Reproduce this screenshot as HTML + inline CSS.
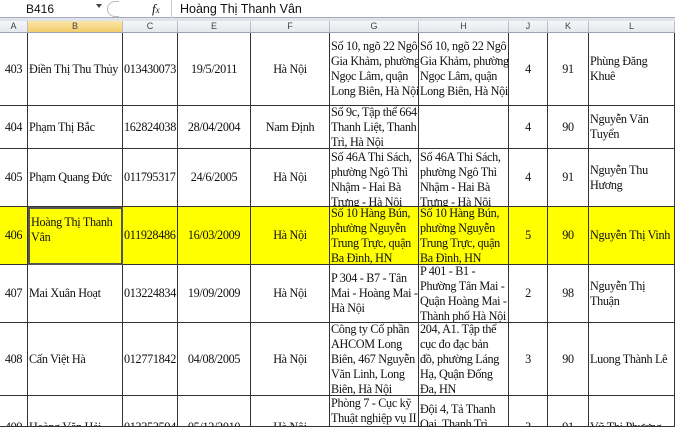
<!DOCTYPE html>
<html><head><meta charset="utf-8"><style>
*{margin:0;padding:0;box-sizing:border-box}
html,body{width:675px;height:427px;overflow:hidden}
body{background:#fff;position:relative}
#w{position:absolute;left:0;top:0;width:675px;height:427px;overflow:hidden;font-family:"Liberation Serif",serif;font-size:12.2px;letter-spacing:-0.32px;color:#111}
.fb{position:absolute;left:0;top:0;width:675px;height:18px;background:#fff;border-bottom:1px solid #aab;font-family:"Liberation Sans",sans-serif;font-size:12px;letter-spacing:0}
.gap{position:absolute;left:0;top:18px;width:675px;height:3px;background:#dfe3ea}
.hdr{position:absolute;top:21px;height:12px;background:linear-gradient(#f6f7f9,#e4e7ec);border-right:1px solid #b9bfc8;border-bottom:1px solid #9aa3ad;font-family:"Liberation Sans",sans-serif;font-size:9px;letter-spacing:0;color:#444;text-align:center;line-height:11px}
.hdr.sel{background:linear-gradient(#fbe6a8,#f3cd6c);}
.c{position:absolute;border-right:1px solid #333;border-bottom:1px solid #333;display:flex;align-items:center;overflow:hidden;line-height:15px;padding:0 1px;white-space:nowrap}
.ctr{justify-content:center;text-align:center}
.y{background:#ffff00}
</style></head><body><div id="w">
<div class="fb">
<div style="position:absolute;left:26px;top:2px;">B416</div>
<div style="position:absolute;left:96px;top:4px;width:0;height:0;border-left:3px solid transparent;border-right:3px solid transparent;border-top:4px solid #444"></div>
<div style="position:absolute;left:107px;top:1px;width:12px;height:16px;border:1px solid #bbb;border-right:none;border-radius:8px 0 0 8px"></div>
<div style="position:absolute;left:152px;top:1px;font-family:'Liberation Serif',serif;font-style:italic;font-size:13px">f<span style="font-size:9px">x</span></div>
<div style="position:absolute;left:171px;top:0;width:1px;height:18px;background:#ccd"></div>
<div style="position:absolute;left:180px;top:2px;font-size:12.5px">Hoàng Thị Thanh Vân</div>
</div>
<div class="gap"></div>
<div class="hdr" style="left:0;width:28px">A</div>
<div class="hdr sel" style="left:28px;width:95px">B</div>
<div class="hdr" style="left:123px;width:55px">C</div>
<div class="hdr" style="left:178px;width:73px">E</div>
<div class="hdr" style="left:251px;width:79px">F</div>
<div class="hdr" style="left:330px;width:89px">G</div>
<div class="hdr" style="left:419px;width:90px">H</div>
<div class="hdr" style="left:509px;width:39px">J</div>
<div class="hdr" style="left:548px;width:41px">K</div>
<div class="hdr" style="left:589px;width:86px">L</div>

<div class="c ctr" style="left:0;top:33px;width:28px;height:73px">403</div>
<div class="c" style="left:28px;top:33px;width:95px;height:73px">Điền Thị Thu Thủy</div>
<div class="c" style="left:123px;top:33px;width:55px;height:73px">013430073</div>
<div class="c ctr" style="left:178px;top:33px;width:73px;height:73px">19/5/2011</div>
<div class="c ctr" style="left:251px;top:33px;width:79px;height:73px">Hà Nội</div>
<div class="c" style="left:330px;top:33px;width:89px;height:73px">Số 10, ngõ 22 Ngô<br>Gia Khảm, phường<br>Ngọc Lâm, quận<br>Long Biên, Hà Nội</div>
<div class="c" style="left:419px;top:33px;width:90px;height:73px">Số 10, ngõ 22 Ngô<br>Gia Khảm, phường<br>Ngọc Lâm, quận<br>Long Biên, Hà Nội</div>
<div class="c ctr" style="left:509px;top:33px;width:39px;height:73px">4</div>
<div class="c ctr" style="left:548px;top:33px;width:41px;height:73px">91</div>
<div class="c" style="left:589px;top:33px;width:86px;height:73px">Phùng Đăng<br>Khuê</div>

<div class="c ctr" style="left:0;top:106px;width:28px;height:43px">404</div>
<div class="c" style="left:28px;top:106px;width:95px;height:43px">Phạm Thị Bắc</div>
<div class="c" style="left:123px;top:106px;width:55px;height:43px">162824038</div>
<div class="c ctr" style="left:178px;top:106px;width:73px;height:43px">28/04/2004</div>
<div class="c ctr" style="left:251px;top:106px;width:79px;height:43px">Nam Định</div>
<div class="c" style="left:330px;top:106px;width:89px;height:43px">Số 9c, Tập thể 664<br>Thanh Liệt, Thanh<br>Trì, Hà Nội</div>
<div class="c" style="left:419px;top:106px;width:90px;height:43px"></div>
<div class="c ctr" style="left:509px;top:106px;width:39px;height:43px">4</div>
<div class="c ctr" style="left:548px;top:106px;width:41px;height:43px">90</div>
<div class="c" style="left:589px;top:106px;width:86px;height:43px">Nguyễn Văn<br>Tuyển</div>

<div class="c ctr" style="left:0;top:149px;width:28px;height:58px">405</div>
<div class="c" style="left:28px;top:149px;width:95px;height:58px">Phạm Quang Đức</div>
<div class="c" style="left:123px;top:149px;width:55px;height:58px">011795317</div>
<div class="c ctr" style="left:178px;top:149px;width:73px;height:58px">24/6/2005</div>
<div class="c ctr" style="left:251px;top:149px;width:79px;height:58px">Hà Nội</div>
<div class="c" style="left:330px;top:149px;width:89px;height:58px;align-items:flex-start;padding-top:1px">Số 46A Thi Sách,<br>phường Ngô Thì<br>Nhậm - Hai Bà<br>Trưng - Hà Nội</div>
<div class="c" style="left:419px;top:149px;width:90px;height:58px;align-items:flex-start;padding-top:1px">Số 46A Thi Sách,<br>phường Ngô Thì<br>Nhậm - Hai Bà<br>Trưng - Hà Nội</div>
<div class="c ctr" style="left:509px;top:149px;width:39px;height:58px">4</div>
<div class="c ctr" style="left:548px;top:149px;width:41px;height:58px">91</div>
<div class="c" style="left:589px;top:149px;width:86px;height:58px">Nguyễn Thu<br>Hương</div>

<div class="c ctr y" style="left:0;top:207px;width:28px;height:58px">406</div>
<div class="c y" style="left:28px;top:207px;width:95px;height:58px;border:2px solid #555;align-items:flex-start;padding-top:6px">Hoàng Thị Thanh<br>Vân</div>
<div class="c y" style="left:123px;top:207px;width:55px;height:58px">011928486</div>
<div class="c ctr y" style="left:178px;top:207px;width:73px;height:58px">16/03/2009</div>
<div class="c ctr y" style="left:251px;top:207px;width:79px;height:58px">Hà Nội</div>
<div class="c y" style="left:330px;top:207px;width:89px;height:58px">Số 10 Hàng Bún,<br>phường Nguyễn<br>Trung Trực, quận<br>Ba Đình, HN</div>
<div class="c y" style="left:419px;top:207px;width:90px;height:58px">Số 10 Hàng Bún,<br>phường Nguyễn<br>Trung Trực, quận<br>Ba Đình, HN</div>
<div class="c ctr y" style="left:509px;top:207px;width:39px;height:58px">5</div>
<div class="c ctr y" style="left:548px;top:207px;width:41px;height:58px">90</div>
<div class="c y" style="left:589px;top:207px;width:86px;height:58px">Nguyễn Thị Vinh</div>

<div class="c ctr" style="left:0;top:265px;width:28px;height:58px">407</div>
<div class="c" style="left:28px;top:265px;width:95px;height:58px">Mai Xuân Hoạt</div>
<div class="c" style="left:123px;top:265px;width:55px;height:58px">013224834</div>
<div class="c ctr" style="left:178px;top:265px;width:73px;height:58px">19/09/2009</div>
<div class="c ctr" style="left:251px;top:265px;width:79px;height:58px">Hà Nội</div>
<div class="c" style="left:330px;top:265px;width:89px;height:58px">P 304 - B7 - Tân<br>Mai - Hoàng Mai -<br>Hà Nội</div>
<div class="c" style="left:419px;top:265px;width:90px;height:58px">P 401 - B1 -<br>Phường Tân Mai -<br>Quận Hoàng Mai -<br>Thành phố Hà Nội</div>
<div class="c ctr" style="left:509px;top:265px;width:39px;height:58px">2</div>
<div class="c ctr" style="left:548px;top:265px;width:41px;height:58px">98</div>
<div class="c" style="left:589px;top:265px;width:86px;height:58px">Nguyễn Thị<br>Thuận</div>

<div class="c ctr" style="left:0;top:323px;width:28px;height:73px">408</div>
<div class="c" style="left:28px;top:323px;width:95px;height:73px">Cấn Việt Hà</div>
<div class="c" style="left:123px;top:323px;width:55px;height:73px">012771842</div>
<div class="c ctr" style="left:178px;top:323px;width:73px;height:73px">04/08/2005</div>
<div class="c ctr" style="left:251px;top:323px;width:79px;height:73px">Hà Nội</div>
<div class="c" style="left:330px;top:323px;width:89px;height:73px">Công ty Cổ phần<br>AHCOM Long<br>Biên, 467 Nguyễn<br>Văn Linh, Long<br>Biên, Hà Nội</div>
<div class="c" style="left:419px;top:323px;width:90px;height:73px">204, A1. Tập thể<br>cục đo đạc bản<br>đồ, phường Láng<br>Hạ, Quận Đống<br>Đa, HN</div>
<div class="c ctr" style="left:509px;top:323px;width:39px;height:73px">3</div>
<div class="c ctr" style="left:548px;top:323px;width:41px;height:73px">90</div>
<div class="c" style="left:589px;top:323px;width:86px;height:73px">Luong Thành Lê</div>

<div class="c ctr" style="left:0;top:396px;width:28px;height:31px;align-items:flex-start;padding-top:24px">409</div>
<div class="c" style="left:28px;top:396px;width:95px;height:31px;align-items:flex-start;padding-top:24px">Hoàng Văn Hải</div>
<div class="c" style="left:123px;top:396px;width:55px;height:31px;align-items:flex-start;padding-top:24px">013353594</div>
<div class="c ctr" style="left:178px;top:396px;width:73px;height:31px;align-items:flex-start;padding-top:24px">05/12/2010</div>
<div class="c ctr" style="left:251px;top:396px;width:79px;height:31px;align-items:flex-start;padding-top:24px">Hà Nội</div>
<div class="c" style="left:330px;top:396px;width:89px;height:31px;align-items:flex-start">Phòng 7 - Cục kỹ<br>Thuật nghiệp vụ II</div>
<div class="c" style="left:419px;top:396px;width:90px;height:31px;align-items:flex-start;padding-top:6px">Đội 4, Tả Thanh<br>Oai, Thanh Trì</div>
<div class="c ctr" style="left:509px;top:396px;width:39px;height:31px;align-items:flex-start;padding-top:24px">3</div>
<div class="c ctr" style="left:548px;top:396px;width:41px;height:31px;align-items:flex-start;padding-top:24px">91</div>
<div class="c" style="left:589px;top:396px;width:86px;height:31px;align-items:flex-start;padding-top:24px">Vũ Thị Phương</div>
</div></body></html>
